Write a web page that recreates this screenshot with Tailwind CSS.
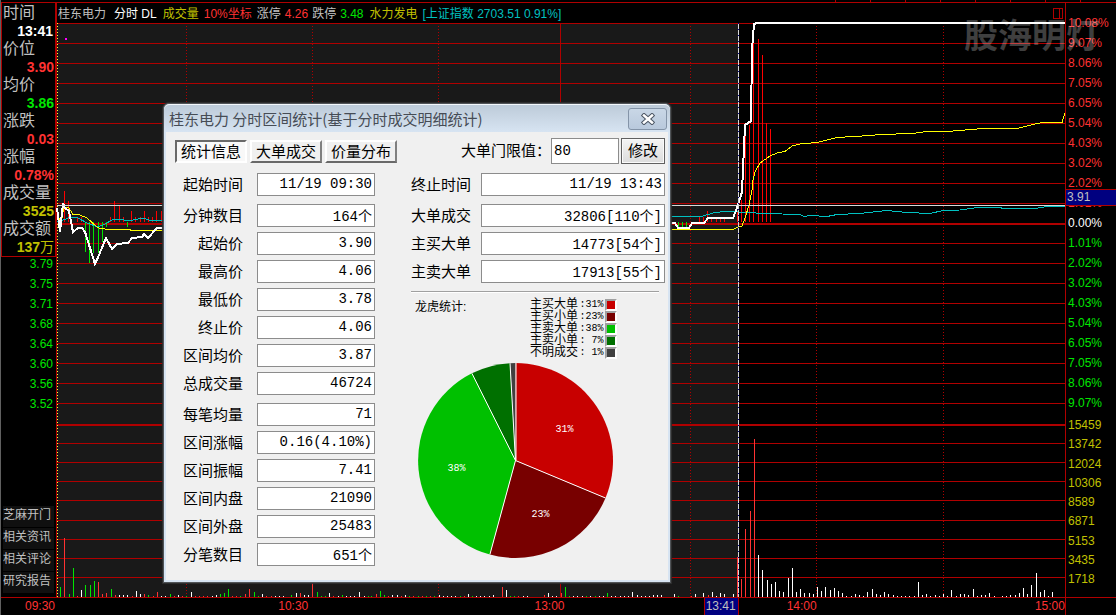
<!DOCTYPE html>
<html lang="zh-CN">
<head>
<meta charset="utf-8">
<title>桂东电力 分时区间统计</title>
<script src="https://cdn.jsdelivr.net/npm/@tailwindcss/browser@4"></script>
</head>
<body class="bg-black">
<div class="relative flex min-h-screen w-full flex-col overflow-hidden border-l border-[#606060] bg-black font-['Liberation_Sans','Noto_Sans_CJK_SC',sans-serif] text-xs text-[#c0c0c0]">

  <!-- ruler above the workspace -->
  <div class="flex h-[3px] shrink-0 justify-end gap-[34px] border-b border-[#b00000] pr-[35px]">
    <i class="w-px bg-[#b00000]"></i><i class="w-px bg-[#b00000]"></i><i class="w-px bg-[#b00000]"></i><i class="w-px bg-[#b00000]"></i><i class="w-px bg-[#b00000]"></i><i class="w-px bg-[#b00000]"></i><i class="w-px bg-[#b00000]"></i><i class="w-px bg-[#b00000]"></i>
  </div>

  <div class="grid flex-1 grid-cols-[56px_1fr_51px]">
    <!-- left column -->
    <aside class="flex flex-col border-r border-[#b00000]">
      <dl class="border-b border-l border-r border-[#b00000] pl-px pt-px text-base leading-[18px]">
        <dt>时间</dt><dd class="pr-[2px] text-right text-sm leading-[18px] font-bold text-white">13:41</dd>
        <dt>价位</dt><dd class="pr-px text-right text-sm leading-[18px] font-bold text-[#ff3232]">3.90</dd>
        <dt>均价</dt><dd class="pr-px text-right text-sm leading-[18px] font-bold text-[#00e600]">3.86</dd>
        <dt>涨跌</dt><dd class="pr-px text-right text-sm leading-[18px] font-bold text-[#ff3232]">0.03</dd>
        <dt>涨幅</dt><dd class="pr-px text-right text-sm leading-[18px] font-bold text-[#ff3232]">0.78%</dd>
        <dt>成交量</dt><dd class="pr-px text-right text-sm leading-[18px] font-bold text-[#c0c000]">3525</dd>
        <dt>成交额</dt><dd class="pr-px text-right text-sm leading-[18px] font-bold text-[#c0c000]">137<span class="font-normal">万</span></dd>
      </dl>
      <ul class="flex flex-col gap-[6px] pr-[3px] text-right leading-[14px] text-[#00e600]">
        <li>3.79</li><li>3.75</li><li>3.71</li><li>3.68</li><li>3.64</li><li>3.60</li><li>3.56</li><li>3.52</li>
      </ul>
      <nav class="mt-auto flex flex-col gap-px px-[2px] pb-1 leading-[17px]">
        <button class="h-[21px] bg-[#101010] pb-[2px] text-left">芝麻开门</button>
        <button class="h-[21px] bg-[#101010] pb-[2px] text-left">相关资讯</button>
        <button class="h-[21px] bg-[#101010] pb-[2px] text-left">相关评论</button>
        <button class="h-[21px] bg-[#101010] pb-[2px] text-left">研究报告</button>
      </nav>
    </aside>

    <!-- chart -->
    <main class="flex min-w-0 flex-col">
      <header class="flex h-5 items-center pt-px whitespace-nowrap pl-px">
        <span>桂东电力</span>
        <span class="ml-2 text-white">分时 DL</span>
        <span class="ml-[6px] text-[#c0c000]">成交量</span>
        <span class="ml-[5px] text-[#ff3232]">10%坐标</span>
        <span class="ml-[5px]">涨停</span>
        <span class="ml-1 text-[#ff3232]">4.26</span>
        <span class="ml-1">跌停</span>
        <span class="ml-1 text-[#00e600]">3.48</span>
        <span class="ml-[6px] text-[#c0c000]">水力发电</span>
        <span class="ml-[5px] text-[#00c0c0]">[上证指数 2703.51 0.91%]</span>
        <svg class="mr-[2px] ml-auto h-[11px] w-[10px]" viewBox="0 0 10 11" fill="none" stroke="#b00000" shape-rendering="crispEdges"><path d="M.5 .5h9v10h-9zM6.5 .5v10"/></svg>
      </header>
      <svg class="min-h-0 w-full flex-1 basis-0 overflow-visible" viewBox="57 23 1008 574" preserveAspectRatio="none" fill="none" shape-rendering="crispEdges">
        <rect x="57" y="23" width="681" height="574" fill="#191919"/>
        <path stroke="#b00000" d="M57 23.5H1065M57 43.5H1065M57 63.5H1065M57 83.5H1065M57 103.5H1065M57 123.5H1065M57 143.5H1065M57 163.5H1065M57 183.5H1065M57 203.5H1065M57 243.5H1065M57 263.5H1065M57 283.5H1065M57 303.5H1065M57 323.5H1065M57 343.5H1065M57 363.5H1065M57 383.5H1065M57 403.5H1065M57 443.5H1065M57 462.5H1065M57 481.5H1065M57 500.5H1065M57 520.5H1065M57 539.5H1065M57 558.5H1065M57 577.5H1065M560.5 23V597"/>
        <path stroke="#b00000" stroke-width="2" d="M57 224H1065M57 425H1065"/>
        <path stroke="#b00000" stroke-dasharray="1 2" d="M186.5 26V597M312.5 26V597M438.5 26V597M690.5 26V597M816.5 26V597M943.5 26V597"/>
        <path stroke="#ffff32" stroke-dasharray="1 2" d="M57.5 23V597"/>
        <rect x="65" y="38" width="2" height="2" fill="#ff00ff"/>
        <!-- index strength bars -->
        <path stroke="#ff0000" d="M64.500 191V222M68.500 201V222M77.500 217V222M81.500 217V222M110.500 217V222M114.500 201V222M119.500 206V222M123.500 217V222M131.500 211V222M135.500 217V222M140.500 217V222M144.500 211V222M148.500 217V222M152.500 217V222M156.500 211V222M161.500 211V222M699.500 217V222M703.500 217V222M707.500 211V222M711.500 217V222M716.500 217V222M720.500 217V222M724.500 217V222M737.500 211V222M741.500 200V222M745.500 128V222M749.500 125V222M753.500 30V222M758.500 39V222M762.500 55V222M766.500 123V222M770.500 129V222"/>
        <path stroke="#00e600" d="M85.500 222V252M89.500 222V263M93.500 222V253M98.500 222V253M102.500 222V242M106.500 222V227M127.500 222V227M678.500 222V227M682.500 222V227M686.500 222V227"/>
        <polyline stroke="#00c0c0" points="57,222 63,220 71,217 78,218 87,223 98,227 105,224 112,220 120,219 128,221 143,218 152,221 163,220 672,216.500 697,216.500 703,216 715,212.500 725,211.500 735,211.500 743,212.500 782,214 800,214.500 804,216.500 810,215.500 827,216.500 837,214.500 860,213.500 887,210.500 907,212.500 930,213.500 943,210.500 960,210 977,207.500 1000,207.500 1003,208.500 1035,208.500 1047,206.500 1065,206.500"/>
        <polyline stroke="#ffff00" points="57,220 62,218 64,207 69,208 73,214.500 80,215 87,218 97,227 100,228.500 110,229.500 128,229.500 133,230.500 672,229.500 733,229.500 738,227 742,226 745,218 749,205 752,190 753,180 755,172 760,163 770,156 777,153 785,151.500 792,146 800,144 817,142.500 837,137.500 870,135.500 880,134.500 913,133.500 927,131.500 947,131.500 983,128.500 1017,128.500 1037,123.500 1043,122.500 1062,122.500 1065,113"/>
        <polyline stroke="#fff" stroke-width="2" points="57,208 60,232 63,203 65,208 69,211 73,232 78,228 82,228 85,232 95,264 99,255 106,238 112,249 117,244 128,243 132,238 142,237 144,234 148,238 157,228 163,228 672,223 675,223 678,228 689,228 692,223 704,223 708,218 733,218 737,208 742,192 745,125 751,121 752,50 754,24 757,23 1065,23"/>
        <path stroke="#d8d8d8" d="M57 205.500H1065"/>
        <path stroke="#00008c" d="M738.500 23V597"/>
        <path stroke="#d8d8d8" stroke-dasharray="5 1" d="M738.500 24V597"/>
        <!-- volume -->
        <path id="vol-r" stroke="#ff3232"/>
        <path id="vol-g" stroke="#00e600"/>
        <path id="vol-w" stroke="#ffffff"/>
      </svg>
    </main>

    <!-- right scale -->
    <aside class="relative flex flex-col border-l border-[#b00000] pt-[10px] pb-2">
      <ul class="pl-[2px] leading-5 text-[#ff3232]">
        <li>10.08%</li><li>9.07%</li><li>8.06%</li><li>7.05%</li><li>6.05%</li><li>5.04%</li><li>4.03%</li><li>3.02%</li><li>2.02%</li><li>1.01%</li>
        <li class="text-white">0.00%</li>
      </ul>
      <ul class="pl-[2px] leading-5 text-[#00e600]">
        <li>1.01%</li><li>2.02%</li><li>3.02%</li><li>4.03%</li><li>5.04%</li><li>6.05%</li><li>7.05%</li><li>8.06%</li><li>9.07%</li>
      </ul>
      <ul class="flex flex-1 flex-col justify-between pt-[3px] pl-[2px] leading-[19px] text-[#c0c000]">
        <li>15459</li><li>13742</li><li>12024</li><li>10306</li><li>8589</li><li>6871</li><li>5153</li><li>3435</li><li>1718</li>
      </ul>
      <span class="absolute inset-x-0 top-[186px] h-[17px] border-y border-[#b00000] bg-[#000080] pl-px leading-[15px]">3.91</span>
    </aside>
  </div>

  <!-- time axis -->
  <div class="relative grid h-[18px] shrink-0 grid-cols-[54fr_253fr_256fr_174fr_78fr_248fr_51fr] border-t border-[#b00000] text-right leading-[17px] text-[#ff3232]">
    <span>09:30</span><span>10:30</span><span>13:00</span>
    <span class="ml-auto border-x border-[#b00000] bg-[#000080] pr-[2px] pl-px text-[#c0c0c0]">13:41</span>
    <span>14:00</span><span>15:00</span><span></span>
    <i class="absolute top-0 right-[50px] h-full w-px bg-[#b00000]"></i>
  </div>

  <!-- watermark -->
  <div class="pointer-events-none absolute top-[11px] right-[16px] font-['Noto_Sans_CJK_SC',sans-serif] text-[34px] leading-[46px] font-bold text-white/25">股海明灯</div>

  <!-- statistics window -->
  <section role="dialog" aria-labelledby="dlg-title" class="absolute top-[103px] left-[162px] w-[508px] rounded-t-md border border-[#505458] bg-[#d7e4f2] px-[2px] pb-[2px] text-[15px] text-black shadow-[0_0_1px_1px_#303030]">
    <div class="-mx-[2px] flex h-7 items-center justify-between rounded-t-md border-t border-white/70 bg-linear-to-b from-[#bdcbd9] to-[#d7e4f2] pr-[3px] pl-[5px]">
      <h1 id="dlg-title" class="font-['Noto_Sans_CJK_SC',sans-serif] leading-6 text-[#464c55]">桂东电力 分时区间统计(基于分时成交明细统计)</h1>
      <button aria-label="关闭" class="flex h-[22px] w-[39px] items-center justify-center rounded-[3px] border border-[#8494a8] bg-linear-to-b from-[#c9d7e6] to-[#b9c9dc]">
        <svg class="h-3 w-[14px]" viewBox="0 0 14 12"><path d="M3 2.500l8 7M11 2.500l-8 7" stroke="#4b5563" stroke-width="4.500" stroke-linecap="square"/><path d="M3 2.500l8 7M11 2.500l-8 7" stroke="#fff" stroke-width="2.500" stroke-linecap="square"/></svg>
      </button>
    </div>

    <div class="bg-[#f0f0f0] pt-[6px] pr-[3px] pb-[14px] pl-[9px]">
      <div class="flex items-center justify-between">
        <div class="flex gap-[3px] leading-[19px]">
          <button aria-pressed="true" class="h-[23px] w-[72px] border-2 border-t-[#696969] border-r-white border-b-white border-l-[#696969] bg-[#f8f8f8]">统计信息</button>
          <button class="h-[23px] w-[72px] border-2 border-t-white border-r-[#808080] border-b-[#696969] border-l-white bg-[#f0f0f0]">大单成交</button>
          <button class="h-[23px] w-[72px] border-2 border-t-white border-r-[#808080] border-b-[#696969] border-l-white bg-[#f0f0f0]">价量分布</button>
        </div>
        <div class="flex items-center">
          <label for="limit" class="w-[90px]">大单门限值：</label>
          <input id="limit" value="80" class="mr-[2px] h-[26px] w-[68px] border border-[#8c8c8c] bg-white px-[2px] font-['Liberation_Mono','Noto_Sans_CJK_SC',monospace] text-sm">
          <button class="h-[26px] w-11 border border-[#606060] bg-linear-to-b from-[#f4f4f4] to-[#dcdcdc] leading-6 shadow-[inset_0_0_0_1px_#fafafa]">修改</button>
        </div>
      </div>

      <div class="mt-[9px] flex justify-between">
        <div id="left-stats" class="flex w-[200px] flex-col gap-2"></div>
        <div class="w-[254px]">
          <div id="right-stats" class="flex flex-col gap-2"></div>
          <hr class="mt-2 mr-[6px] border-t border-b border-t-[#a0a0a0] border-b-white">
          <div class="mt-[6px] flex justify-between pr-[48px] pl-1 text-xs">
            <h2 class="leading-4">龙虎统计:</h2>
            <ul class="w-[87px] font-['Liberation_Mono','Noto_Sans_CJK_SC',monospace] leading-3">
              <li class="flex h-3 items-center justify-between">主买大单<span class="w-6 text-right text-[10px] whitespace-pre">:31%</span><i class="size-3 border-2 border-t-[#a0a0a0] border-r-white border-b-white border-l-[#a0a0a0] bg-[#c80000]"></i></li>
              <li class="flex h-3 items-center justify-between">主买小单<span class="w-6 text-right text-[10px] whitespace-pre">:23%</span><i class="size-3 border-2 border-t-[#a0a0a0] border-r-white border-b-white border-l-[#a0a0a0] bg-[#780000]"></i></li>
              <li class="flex h-3 items-center justify-between">主卖大单<span class="w-6 text-right text-[10px] whitespace-pre">:38%</span><i class="size-3 border-2 border-t-[#a0a0a0] border-r-white border-b-white border-l-[#a0a0a0] bg-[#00c000]"></i></li>
              <li class="flex h-3 items-center justify-between">主卖小单<span class="w-6 text-right text-[10px] whitespace-pre">: 7%</span><i class="size-3 border-2 border-t-[#a0a0a0] border-r-white border-b-white border-l-[#a0a0a0] bg-[#007000]"></i></li>
              <li class="flex h-3 items-center justify-between">不明成交<span class="w-6 text-right text-[10px] whitespace-pre">: 1%</span><i class="size-3 border-2 border-t-[#a0a0a0] border-r-white border-b-white border-l-[#a0a0a0] bg-[#404040]"></i></li>
            </ul>
          </div>
          <svg class="mt-1 ml-[7px] h-[195px] w-[195px]" viewBox="-97.500 -97.500 195 195" font-family="Liberation Mono, monospace" font-size="10" fill="#fff" text-anchor="middle">
            <path fill="#c80000" d="M0 0V-97.500A97.500 97.500 0 0 1 90 37.500Z"/>
            <path fill="#780000" d="M0 0L90 37.500A97.500 97.500 0 0 1 -25.600 94Z"/>
            <path fill="#00c000" d="M0 0L-25.600 94A97.500 97.500 0 0 1 -43.600 -87.200Z"/>
            <path fill="#007000" d="M0 0L-43.600 -87.200A97.500 97.500 0 0 1 -5.500 -97.300Z"/>
            <path fill="#404040" d="M0 0L-5.500 -97.300A97.500 97.500 0 0 1 0 -97.500Z"/>
            <path stroke="#fff" fill="none" d="M.500 0V-97.500M0 0L90 37.500M0 0L-25.600 94M0 0L-43.600 -87.200M0 0L-5.500 -97.300"/>
            <text x="49" y="-29">31%</text><text x="25" y="56">23%</text><text x="-59" y="10">38%</text>
          </svg>
        </div>
      </div>
    </div>
  </section>
</div>

<template id="group"><div class="flex flex-col gap-[5px]"></div></template>
<template id="row">
  <div class="flex h-[23px] items-center justify-end">
    <label class="mr-auto flex-1 text-right leading-[23px]"></label>
    <input readonly class="ml-[14px] h-[23px] w-[118px] border border-[#8c8c8c] bg-white px-[2px] pb-[2px] text-right font-['Liberation_Mono','Noto_Sans_CJK_SC',monospace] text-sm">
  </div>
</template>
<template id="wide-row">
  <div class="flex h-[23px] items-center">
    <label class="w-[70px] leading-[23px]"></label>
    <input readonly class="h-[23px] min-w-0 flex-1 border border-[#8c8c8c] bg-white px-[2px] pb-[2px] text-right font-['Liberation_Mono','Noto_Sans_CJK_SC',monospace] text-sm">
  </div>
</template>

<script>
let n = 0;
function fill(hostId, rowId, groups) {
  const host = document.getElementById(hostId);
  for (const rows of groups) {
    const g = document.getElementById('group').content.firstElementChild.cloneNode(true);
    for (const [name, value] of rows) {
      const r = document.getElementById(rowId).content.firstElementChild.cloneNode(true);
      const id = 'stat-' + (++n);
      const label = r.querySelector('label'), input = r.querySelector('input');
      label.textContent = name; label.htmlFor = id;
      input.id = id; input.setAttribute('value', value);
      g.append(r);
    }
    host.append(g);
  }
}
fill('left-stats', 'row', [
  [['起始时间', '11/19 09:30']],
  [['分钟数目', '164个'], ['起始价', '3.90'], ['最高价', '4.06'], ['最低价', '3.78'], ['终止价', '4.06'], ['区间均价', '3.87'], ['总成交量', '46724']],
  [['每笔均量', '71'], ['区间涨幅', '0.16(4.10%)'], ['区间振幅', '7.41'], ['区间内盘', '21090'], ['区间外盘', '25483'], ['分笔数目', '651个']]
]);
fill('right-stats', 'wide-row', [
  [['终止时间', '11/19 13:43']],
  [['大单成交', '32806[110个]'], ['主买大单', '14773[54个]'], ['主卖大单', '17913[55个]']]
]);

// Volume: x position, colour (r/g/w), bar height
const volume = `60g10 64r59 69g3 73g29 77r1 81w7 85g12 90g12 94g16 98r15 102r3 106r4 111g8 115r2 119w2 123w2 127w2 132r1 136w6 140w3 144r3 148g2 153r1 157r5 161w1 165w1
170g3 174r1 178w2 182r1 186g1 191w5 195r1 199r1 203r1 207r1 212w1 216w2 220g3 224g4 228g8 232r1 236r1 240g1 245r3 249r8 254g5 258g1 262w3 266r1 271r1 275w1 279w1 283w1 291g2 296w4 300r4 304w2 308w2 312r14 317g5 321g1 325g1 329w4 333r1 338w1 342g2 346w1 350w1 354w1 359w5 364w1 368g1 371g1 376r3 380g6 384g2 388r1 392w2 397w2 401r1
405w2 409g1 413r1 418g1 422r1 426g1 430r1 434g1 439w2 443w1 447w1 451w1 455w1 460g1 464r1 468w3 472g1 476w1 480w1 484w1 489w1 493w2 502r10 506w7 510g1 514g1 518r1 523w1 527w1 544r2 548w4 552w1 556w1 561r4 565g10 569g1 573w1 577w1 582w1 586g1 590w1 595g1 599w1 603w1 607g4 611w1 615w1 620w1 624w1 628w1 632w5 637w2 641w1 645w1 649w1 653w2 657w2 661w2
674w3 678g1 691r1 695w3 703w4 708r2 712w5 716w1 720w4 724w3 733w3 737r40 741r18 745r68 750r86 754r158 758w42 762w27 767w17 771w13 775w15 779w6 783w5 788w19 792w29 796w5 800w8 804w4 809w4 813w3 817w10 821w6 825w10 830w7 834w9 838w6 842w4 846w1 851w1 855w3 859w2 863w1 867w5
872w8 876w3 880w2 884w5 888w3 893w2 897w1 901w1 905w1 909w1 914w1 918w15 922w2 926w3 930w1 935w2 939w1 943w3 947w1 951w7 956w1 960w3 964w3 968w2 973w8 977w1 981w2 985w2 989w4 994w1 1002w1 1006w1 1010w2 1015w2 1019w4 1023w9 1027w3 1031w12 1036w24 1040w5 1044w7 1048w1 1052w5 1065r130`;
const paths = { r: '', g: '', w: '' };
for (const [, x, c, h] of volume.matchAll(/(\d+)([rgw])(\d+)/g)) paths[c] += `M${x}.5 597v-${h}`;
for (const c in paths) document.getElementById('vol-' + c).setAttribute('d', paths[c]);
</script>
</body>
</html>
